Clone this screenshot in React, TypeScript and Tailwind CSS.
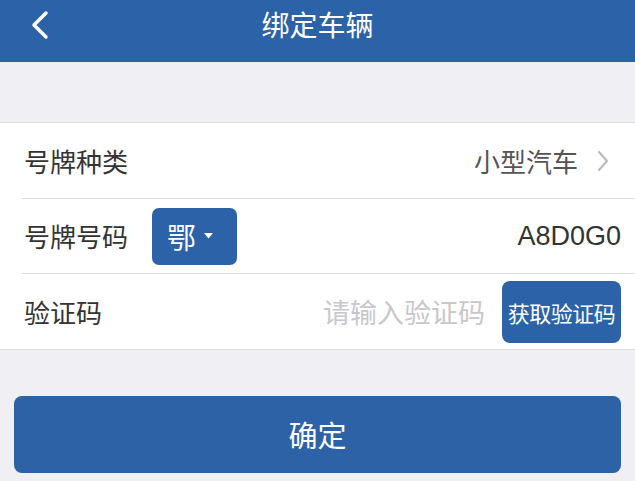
import React from "react";

const font = { fontFamily: '"Noto Sans CJK SC", "Noto Sans", sans-serif' };

export default function App() {
  return (
    <div className="w-[635px] h-[481px] bg-[#efeff4] overflow-hidden flex flex-col" style={font}>
      <div className="h-[62px] bg-[#2b62a8] flex items-center relative shrink-0">
        <svg className="absolute left-[29px] top-[10px]" width="22" height="30" viewBox="0 0 22 30">
          <path d="M17 3 L5 15 L17 27" fill="none" stroke="#fff" strokeWidth="3.5" strokeLinecap="round" strokeLinejoin="round" />
        </svg>
        <div className="flex-1 text-center text-white text-[28px] leading-none -mt-[14px]">绑定车辆</div>
      </div>
      <div className="h-[60px] shrink-0" />
      <div className="bg-white border-y border-[#dcdcdc] flex flex-col">
        <div className="h-[75px] flex items-center pl-[24px] pr-[26px]">
          <div className="text-[26px] text-[#333] leading-none">号牌种类</div>
          <div className="ml-auto text-[26px] text-[#555] leading-none">小型汽车</div>
          <svg className="ml-[19px]" width="12" height="22" viewBox="0 0 12 22">
            <path d="M2 2 L10 11 L2 20" fill="none" stroke="#b8b8b8" strokeWidth="2" strokeLinecap="round" strokeLinejoin="round" />
          </svg>
        </div>
        <div className="ml-[22px] h-px bg-[#dedede]" />
        <div className="h-[74px] flex items-center pl-[24px] pr-[14px]">
          <div className="text-[26px] text-[#333] leading-none">号牌号码</div>
          <div className="ml-[24px] w-[85px] h-[57px] rounded-[7px] bg-[#2b62a8] flex items-center pl-[15px]">
            <span className="text-white text-[29px] leading-none">鄂</span>
            <svg className="ml-[8px]" width="9" height="6" viewBox="0 0 9 6">
              <path d="M0 0 L9 0 L4.5 5.5 Z" fill="#fff" />
            </svg>
          </div>
          <div className="ml-auto text-[27px] text-[#333] leading-none" style={{ fontFamily: '"Liberation Sans", Arial, sans-serif' }}>A8D0G0</div>
        </div>
        <div className="ml-[22px] h-px bg-[#dedede]" />
        <div className="h-[75px] flex items-center pl-[24px] pr-[14px]">
          <div className="text-[26px] text-[#333] leading-none">验证码</div>
          <div className="ml-auto text-[27px] text-[#c8c8cc] leading-none">请输入验证码</div>
          <div className="ml-[17px] w-[119px] h-[62px] rounded-[8px] bg-[#2b62a8] flex items-center justify-center text-white text-[22px] leading-none tracking-[-0.5px]">获取验证码</div>
        </div>
      </div>
      <div className="h-[46px] shrink-0" />
      <div className="mx-[14px] h-[77px] rounded-[8px] bg-[#2d62a6] flex items-center justify-center text-white text-[29px] leading-none">确定</div>
    </div>
  );
}
